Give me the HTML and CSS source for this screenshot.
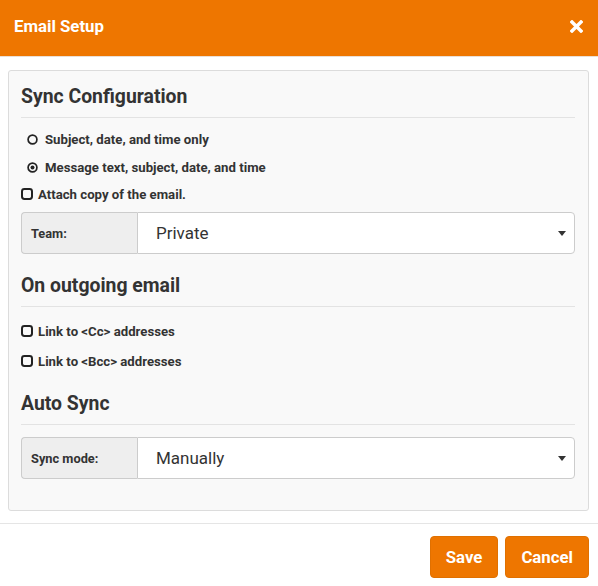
FILE: index.html
```html
<!DOCTYPE html>
<html>
<head>
<meta charset="utf-8">
<link rel="stylesheet" href="styles.css">
</head>
<body>
<div class="modal">
  <div class="modal-header">
    <span class="modal-title">Email Setup</span>
    <svg class="close" width="13" height="13" viewBox="0 0 13 13"><path d="M2 2 L11 11 M11 2 L2 11" stroke="#fff" stroke-width="3.4" stroke-linecap="square"/></svg>
  </div>
  <div class="modal-body">
    <div class="panel">
      <h3 class="section-title">Sync Configuration</h3>
      <div class="options">
        <div class="row radio-row">
          <svg class="radio" width="11" height="11" viewBox="0 0 11 11"><circle cx="5.5" cy="5.5" r="4.4" fill="none" stroke="#222" stroke-width="1.7"/></svg>
          <span>Subject, date, and time only</span>
        </div>
        <div class="row radio-row">
          <svg class="radio" width="11" height="11" viewBox="0 0 11 11"><circle cx="5.5" cy="5.5" r="4.4" fill="none" stroke="#222" stroke-width="1.7"/><circle cx="5.5" cy="5.5" r="2" fill="#222"/></svg>
          <span>Message text, subject, date, and time</span>
        </div>
        <div class="row check-row first-check">
          <svg class="check" width="12" height="12" viewBox="0 0 12 12"><rect x="1" y="1" width="10" height="10" rx="2.4" fill="none" stroke="#222" stroke-width="2"/></svg>
          <span>Attach copy of the email.</span>
        </div>
      </div>
      <div class="input-group">
        <div class="addon">Team:</div>
        <div class="select">Private<span class="caret"></span></div>
      </div>

      <h3 class="section-title second">On outgoing email</h3>
      <div class="checks">
        <div class="row check-row tall">
          <svg class="check" width="12" height="12" viewBox="0 0 12 12"><rect x="1" y="1" width="10" height="10" rx="2.4" fill="none" stroke="#222" stroke-width="2"/></svg>
          <span>Link to &lt;Cc&gt; addresses</span>
        </div>
        <div class="row check-row tall">
          <svg class="check" width="12" height="12" viewBox="0 0 12 12"><rect x="1" y="1" width="10" height="10" rx="2.4" fill="none" stroke="#222" stroke-width="2"/></svg>
          <span>Link to &lt;Bcc&gt; addresses</span>
        </div>
      </div>

      <h3 class="section-title third">Auto Sync</h3>
      <div class="input-group last">
        <div class="addon">Sync mode:</div>
        <div class="select">Manually<span class="caret"></span></div>
      </div>
    </div>
  </div>
  <div class="modal-footer">
    <button class="btn">Save</button>
    <button class="btn">Cancel</button>
  </div>
</div>
</body>
</html>
```

FILE: styles.css
```css
* { box-sizing: border-box; }
html, body { margin: 0; padding: 0; background: #fff; }
body { font-family: Roboto, "Liberation Sans", sans-serif; color: #333; width: 598px; height: 586px; overflow: hidden; }

.modal-header {
  height: 57px;
  background: #ee7600;
  border-bottom: 1px solid #eadfd5;
  display: flex;
  align-items: center;
  justify-content: space-between;
  padding: 0 15px 4px 14px;
}
.modal-title { color: #fff; font-weight: 700; font-size: 16.8px; }
.close { display: block; }

.modal-body { padding: 13px 9px 12px 8px; border-bottom: 1px solid #e5e5e5; }
.panel {
  background: #f9f9f9;
  border: 1px solid #dcdcdc;
  border-radius: 3px;
  padding: 10px 13px 31px 12px;
}
.section-title {
  margin: 0;
  font-size: 19.4px;
  font-weight: 700;
  line-height: 30px;
  height: 37px;
  padding-top: 1px;
  padding-bottom: 5px;
  border-bottom: 1px solid #e3e3e3;
  color: #333;
}
.section-title.second { margin-top: 16px; }
.section-title.third { margin-top: 12px; }

.options { padding-top: 7px; }
.row { display: flex; align-items: center; font-size: 13.2px; font-weight: 700; color: #333; }
.radio-row { height: 28px; padding-left: 6px; }
.radio-row .radio { margin-right: 7px; }
.check-row { height: 26px; }
.check-row .check { margin-right: 5px; margin-left: 0; }
.checks { padding-top: 9px; }
.check-row.tall { height: 30px; }

.input-group {
  display: flex;
  height: 42px;
  margin-top: 5px;
}
.input-group.last { margin-top: 12px; }
.addon {
  width: 116px;
  background: #eeeeee;
  border: 1px solid #cccccc;
  border-right: none;
  border-radius: 4px 0 0 4px;
  display: flex;
  align-items: center;
  padding-left: 9px;
  font-size: 12.8px;
  font-weight: 700;
  color: #333;
}
.select {
  flex: 1;
  background: #fff;
  border: 1px solid #cccccc;
  border-radius: 0 4px 4px 0;
  display: flex;
  align-items: center;
  justify-content: space-between;
  padding: 0 8px 0 18px;
  font-size: 17px;
  color: #333;
}
.caret {
  width: 0; height: 0;
  border-left: 4.5px solid transparent;
  border-right: 4.5px solid transparent;
  border-top: 5px solid #333;
}

.modal-footer {
  display: flex;
  justify-content: flex-end;
  gap: 7px;
  padding: 12px 9px 0 0;
}
.btn {
  height: 42px;
  background: #ee7600;
  border: 1px solid #e07000;
  border-radius: 4px;
  color: #fff;
  font-family: Roboto, "Liberation Sans", sans-serif;
  font-size: 16.8px;
  font-weight: 700;
  padding: 0 15px;
}
```
